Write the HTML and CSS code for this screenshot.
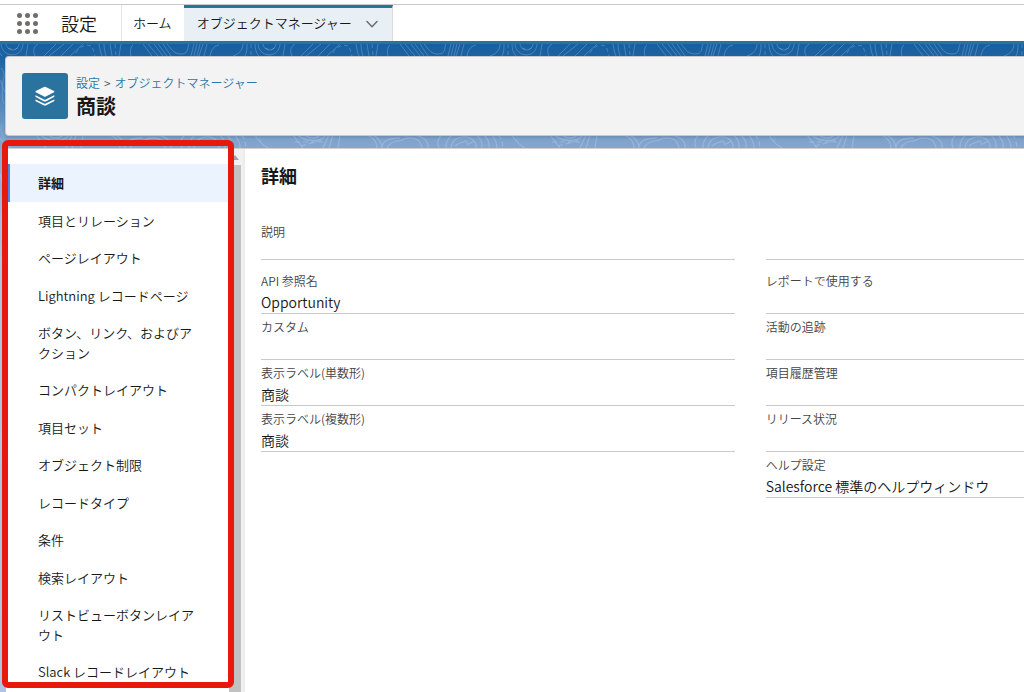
FILE: index.html
```html
<!DOCTYPE html>
<html lang="ja">
<head>
<meta charset="utf-8">
<meta name="viewport" content="width=device-width, initial-scale=1">
<title>商談 | オブジェクトマネージャー</title>
<link rel="stylesheet" href="styles.css">
</head>
<body>
<header class="global-nav">
  <button class="launcher" type="button" aria-label="アプリケーションランチャー">
    <svg width="22" height="22" viewBox="0 0 22 22" fill="#706e6b" aria-hidden="true">
      <circle cx="3.500" cy="3.500" r="2.500"/><circle cx="11.500" cy="3.500" r="2.500"/><circle cx="19.500" cy="3.500" r="2.500"/>
      <circle cx="3.500" cy="11.500" r="2.500"/><circle cx="11.500" cy="11.500" r="2.500"/><circle cx="19.500" cy="11.500" r="2.500"/>
      <circle cx="3.500" cy="19.500" r="2.500"/><circle cx="11.500" cy="19.500" r="2.500"/><circle cx="19.500" cy="19.500" r="2.500"/>
    </svg>
  </button>
  <span class="app-name">設定</span>
  <nav class="tabs">
    <a class="tab" href="#home">ホーム</a>
    <div class="tab tab-active">
      <a class="tab-link" href="#objects">オブジェクトマネージャー</a>
      <button class="tab-menu" type="button" aria-label="メニュー">
        <svg width="12" height="10" viewBox="0 0 12 10" fill="none" stroke="#706e6b" stroke-width="1.5" stroke-linecap="round" stroke-linejoin="round" aria-hidden="true"><path d="M1 3.500l5 5.200 5-5.200"/></svg>
      </button>
    </div>
  </nav>
</header>

<div class="stage">
  <svg class="contours" aria-hidden="true">
    <defs>
      <pattern id="topo" x="143" y="0" width="257" height="650" patternUnits="userSpaceOnUse">
        <g fill="none" stroke="#8fb4dc" stroke-opacity=".4" stroke-width="1">
          <path d="M0 0l9 12M5 0l10 12M11 0l9 12M15 0l9 12M20 0l8 12M24 0c4 4 6 10 14 10s6-6 8-10M51 0l-3 12M54 0l-3 12M57 0l-3 12M60 0l-4 12M64 0l-3 12M76 1c-6 1-8 6-9 11M100 0c0 6-4 10-10 12M104 0c0 5 0 8-2 12M112 0c0 4 1 9 4 12M115 0c1 14 21 15 22 0M120 0c1 8 12 8 13 0M142 0l-2 12M152 0c-5 3-5 8-3 12M170 0l-12 12M178 0l-15 12M187 0l-12 12M197 0l-13 12M213 0c1 4 1 8 3 12M218 0c0 4 1 9 2 12M224 0l2 12M235 0l-2 12M247 1c-3 2-3 8-2 11"/>
          <path stroke-dasharray="4 3" d="M108 0v12M122 4l6 2 5-3M190 9c3-6 9-9 16-7l3 10M229 0l1 12"/>
          <path d="M115 24c8 8-3 14 4 24s-3 18 2 28M114 36c5 6 0 18 4 24M116 80c-3 6 2 12 2 18"/>
        </g>
        <g fill="none" stroke="#b4cae8" stroke-opacity=".45" stroke-width="1.2">
          <path d="M0 97c8-5 20-5 22 7M5 92c14-3 24 3 23 12M42 91c-4 3-5 8-3 13M46 104c-1-22 38-22 36 0M51 104c1-15 26-15 25 0M55 102c4-4 8-3 10-5 4 0 0 4 4 3l5-3M84 91c4 4 6 8 5 13M92 91c3 4 5 8 5 13M112 91c3 5 7 10 13 13M150 91l10 13M155 91c7 7 22 8 28 0M162 91c5 4 11 4 15 0M186 91l-6 13M190 91l-4 13M197 91l-2 13M224 91c7 2 10 8 10 13M229 91c6 2 10 8 10 13M239 104c0-13 25-11 37-7M244 104c4-8 14-8 22-6"/>
          <path stroke-dasharray="5 3" d="M98 91c5 4 4 8 5 13M152 98h28M158 102l22-6"/>
          <path d="M114 130c8 20-3 40 3 70s-4 60 1 90M116 350c5 20-5 40 1 70s-2 60 2 100M113 560c8 12 2 24 4 40"/>
        </g>
      </pattern>
    </defs>
    <rect width="100%" height="100%" fill="url(#topo)"/>
  </svg>

  <header class="page-header">
    <svg class="object-icon" viewBox="0 0 46 46" aria-hidden="true">
      <rect width="46" height="46" rx="3" fill="#2a739e"/>
      <g fill="#fff">
        <path d="M22 14.1q.9-.5 1.8 0l8.2 4q.9.6 0 1.200l-8.200 4.200q-.9.400-1.800 0l-8.200-4.200q-.9-.6 0-1.200z"/>
        <path d="M13.600 22.300l8.400 4.200q.9.500 1.800 0l8.400-4.200q.7 1.200-.2 1.800l-8.200 4.300q-.9.400-1.800 0l-8.200-4.300q-.9-.6-.2-1.800z"/>
        <path d="M13.600 26.400l8.400 4.200q.9.500 1.800 0l8.400-4.200q.7 1.200-.2 1.800l-8.200 4.200q-.9.400-1.800 0l-8.200-4.200q-.9-.6-.2-1.800z"/>
      </g>
    </svg>
    <div class="page-title">
      <nav class="crumbs"><a href="#setup">設定</a><span class="crumb-sep">&gt;</span><a href="#objects">オブジェクトマネージャー</a></nav>
      <h1>商談</h1>
    </div>
  </header>

  <div class="workspace">
    <aside class="sidebar">
      <nav class="side-nav">
        <a class="side-link side-link-active" href="#details">詳細</a>
        <a class="side-link" href="#fields">項目とリレーション</a>
        <a class="side-link" href="#layouts">ページレイアウト</a>
        <a class="side-link" href="#lightning">Lightning レコードページ</a>
        <a class="side-link" href="#actions">ボタン、リンク、およびアクション</a>
        <a class="side-link" href="#compact">コンパクトレイアウト</a>
        <a class="side-link" href="#fieldsets">項目セット</a>
        <a class="side-link" href="#limits">オブジェクト制限</a>
        <a class="side-link" href="#recordtypes">レコードタイプ</a>
        <a class="side-link" href="#conditions">条件</a>
        <a class="side-link" href="#search">検索レイアウト</a>
        <a class="side-link" href="#listview">リストビューボタンレイアウト</a>
        <a class="side-link" href="#slack">Slack レコードレイアウト</a>
      </nav>
      <div class="scroll-track" aria-hidden="true">
        <svg class="scroll-arrow" viewBox="0 0 8 5"><path d="M0 5 4 0l4 5z" fill="#a3a3a3"/></svg>
        <div class="scroll-thumb"></div>
      </div>
      <div class="highlight"></div>
    </aside>

    <main class="detail">
      <h2>詳細</h2>
      <div class="columns">
        <dl class="fields">
          <div class="field field-first"><dt>説明</dt><dd></dd></div>
          <div class="field"><dt>API 参照名</dt><dd>Opportunity</dd></div>
          <div class="field"><dt>カスタム</dt><dd></dd></div>
          <div class="field"><dt>表示ラベル(単数形)</dt><dd>商談</dd></div>
          <div class="field"><dt>表示ラベル(複数形)</dt><dd>商談</dd></div>
        </dl>
        <dl class="fields">
          <div class="field field-first"><dt></dt><dd></dd></div>
          <div class="field"><dt>レポートで使用する</dt><dd></dd></div>
          <div class="field"><dt>活動の追跡</dt><dd></dd></div>
          <div class="field"><dt>項目履歴管理</dt><dd></dd></div>
          <div class="field"><dt>リリース状況</dt><dd></dd></div>
          <div class="field"><dt>ヘルプ設定</dt><dd>Salesforce 標準のヘルプウィンドウ</dd></div>
        </dl>
      </div>
    </main>
  </div>
</div>
</body>
</html>
```

FILE: styles.css
```css
* {
  box-sizing: border-box;
}

body {
  margin: 0;
  min-height: 100vh;
  display: flex;
  flex-direction: column;
  padding-top: 4px;
  background: #fff;
  color: #181818;
  font-family: "Noto Sans CJK JP", "Noto Sans", sans-serif;
  font-size: 13px;
  font-weight: 350;
  line-height: 1.5;
}

a {
  color: inherit;
  text-decoration: none;
}

button {
  padding: 0;
  border: 0;
  background: none;
  font: inherit;
  cursor: pointer;
}

h1,
h2,
dl,
dd {
  margin: 0;
}

/* Global navigation */
.global-nav {
  display: flex;
  height: 40px;
  border-top: 1px solid #c9c9c9;
  border-bottom: 3px solid #2a739e;
}

.launcher {
  display: flex;
  align-items: center;
  padding-left: 16px;
}

.app-name {
  display: flex;
  align-items: center;
  width: 83px;
  padding-left: 23px;
  font-size: 18px;
}

.tabs {
  display: flex;
}

.tab {
  display: flex;
  align-items: center;
  padding: 0 12px 1px 11px;
  border-left: 1px solid #e5e5e5;
}

.tab-active {
  gap: 14px;
  padding: 0 14px 4px 13px;
  border-top: 3px solid #2a739e;
  border-left: 0;
  border-right: 1px solid #dddbda;
  background: #e9f0f5;
}

.tab-menu {
  display: flex;
}

/* Themed backdrop */
.stage {
  position: relative;
  flex: 1;
  display: flex;
  flex-direction: column;
  padding: 12px 0 0 5px;
  background: linear-gradient(#195e9e 0, #1d62a1 14px, #7ba0ca 92px, #8aabd2 110px, #b0c4df 220px);
}

.contours {
  position: absolute;
  inset: 0;
  width: 100%;
  height: 100%;
}

.page-header {
  position: relative;
  display: flex;
  align-items: center;
  gap: 8px;
  height: 80px;
  padding: 0 0 1px 16px;
  border: 1px solid #c9c9c9;
  border-right: 0;
  border-radius: 4px 0 0 4px;
  background: #f3f3f3;
  box-shadow: 0 2px 2px rgba(0, 0, 0, 0.1);
}

.object-icon {
  width: 46px;
  height: 46px;
}

.crumbs {
  display: flex;
  gap: 4px;
  color: #2a78ac;
  font-size: 12px;
  line-height: 20px;
}

.crumb-sep {
  color: #514f4d;
}

h1 {
  font-size: 20px;
  font-weight: 700;
  line-height: 25px;
}

/* Workspace */
.workspace {
  position: relative;
  flex: 1;
  display: flex;
  margin: 12px 0 0 1px;
  border-top: 1px solid #d0d0d0;
  background: #fff;
}

.sidebar {
  position: relative;
  flex: none;
  display: flex;
  width: 239px;
  border-right: 2px solid #ececec;
}

.side-nav {
  flex: 1;
  padding-top: 15px;
}

.side-link {
  display: block;
  padding: 9px 28px 9px 32px;
}

.side-link-active {
  padding-left: 28px;
  border-left: 4px solid #4a85ea;
  background: #ebf3fe;
  font-weight: 700;
}

.scroll-track {
  display: flex;
  flex-direction: column;
  align-items: center;
  width: 14px;
  padding: 6px 2px 0 0;
  background: #f1f1f1;
}

.scroll-arrow {
  width: 8px;
  height: 5px;
}

.scroll-thumb {
  flex: 1;
  width: 12px;
  margin-top: 5px;
  background: #c1c1c1;
}

.highlight {
  position: absolute;
  inset: -9px 9px 4px -4px;
  border: 6px solid #e8180c;
  border-radius: 6px;
  pointer-events: none;
}

/* Detail panel */
.detail {
  flex: 1;
  min-width: 0;
  padding: 13px 0 16px 16px;
}

h2 {
  font-size: 18px;
  font-weight: 700;
  line-height: 26px;
}

.columns {
  display: grid;
  grid-template-columns: 11fr 6fr;
  gap: 31px;
  margin-top: 31px;
}

.field {
  padding-top: 3px;
  border-bottom: 1px solid #c9c9c9;
}

.field dt {
  height: 20px;
  color: #444;
  font-size: 12px;
  line-height: 20px;
}

.field dd {
  height: 22px;
  font-size: 14px;
  line-height: 22px;
  white-space: nowrap;
}

.field-first {
  margin-bottom: 8px;
}

.field-first dd {
  height: 17px;
}
```
